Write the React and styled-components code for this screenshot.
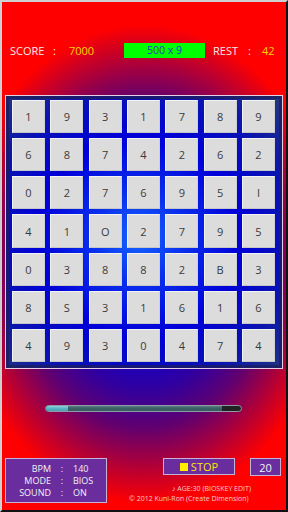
import React from "react";
import styled, { createGlobalStyle } from "styled-components";

const Global = createGlobalStyle`
  html, body { margin: 0; padding: 0; background: #000; }
  * { box-sizing: border-box; }
`;

const Screen = styled.div`
  width: 288px;
  height: 512px;
  border: 2px solid;
  border-color: #cfcfcf #111 #111 #cfcfcf;
  display: flex;
  flex-direction: column;
  font-family: "Open Sans", "Noto Sans", sans-serif;
  overflow: hidden;
  background: radial-gradient(
    ellipse 188px 240px at 142px 262px,
    #0000ff 0%,
    #0a00d8 30%,
    #3000a0 52%,
    #600070 68%,
    #b00038 84%,
    #ff0000 100%
  );
`;

const Header = styled.div`
  display: flex;
  align-items: center;
  height: 15px;
  margin-top: 41px;
  padding-left: 8px;
  font-size: 11px;
`;

const HText = styled.span`
  width: ${(p) => p.$w}px;
  color: ${(p) => (p.$yellow ? "#ffd400" : "#f4eaea")};
  white-space: nowrap;
  line-height: 15px;
`;

const GreenBox = styled.div`
  width: 81px;
  height: 15px;
  background: #00ff00;
  color: #2436c8;
  font-size: 10.5px;
  line-height: 15px;
  text-align: center;
  margin-right: 8px;
`;

const Board = styled.div`
  margin: 37px 0 0 3px;
  width: 278px;
  height: 274px;
  border: 1px solid #e6d2e6;
  padding: 4px 7px 6px 6px;
  background: radial-gradient(
    ellipse at 48% 52%,
    #1466ff 0%,
    #0a30ee 22%,
    #0000d8 50%,
    #0a14b0 75%,
    #243a78 100%
  );
  box-shadow: inset 0 0 0 3px rgba(30, 30, 90, 0.75);
`;

const Grid = styled.div`
  display: grid;
  grid-template-columns: repeat(7, 1fr);
  grid-template-rows: repeat(7, 1fr);
  column-gap: 5.3px;
  row-gap: 5.1px;
  width: 263px;
  height: 262px;
`;

const Cell = styled.div`
  background: #dcdcdc;
  border: 1px solid #f3f3f3;
  border-bottom-color: #c6c6c6;
  border-right-color: #d0d0d0;
  display: flex;
  align-items: center;
  justify-content: center;
  color: #3a3a3a;
  font-size: 11px;
`;

const Progress = styled.div`
  margin: 36px 0 0 43px;
  width: 197px;
  height: 7px;
  border-radius: 4px;
  border: 1px solid #8c9ea4;
  background: #222;
  display: flex;
  overflow: hidden;
`;

const Secondary = styled.div`
  width: 176px;
  height: 100%;
  background: linear-gradient(#5d8086 0%, #3b6268 40%, #365a60 100%);
  display: flex;
`;

const Primary = styled.div`
  height: 100%;
  background: linear-gradient(#8fd4e0 0%, #5cb4c6 45%, #4aa0b2 100%);
`;

const Bottom = styled.div`
  display: flex;
  margin-top: 46px;
  padding-left: 3px;
`;

const InfoBox = styled.div`
  width: 102px;
  height: 45px;
  background: #6a2d9e;
  border: 1px solid #c7b2d6;
  display: grid;
  grid-template-columns: 45px 22px auto;
  align-content: center;
  font-size: 9px;
  line-height: 12px;
  color: #f2f2f2;
`;

const Label = styled.span`
  text-align: right;
`;

const Colon = styled.span`
  text-align: center;
`;

const RightCol = styled.div`
  display: flex;
  flex-direction: column;
  flex: 1;
`;

const ButtonRow = styled.div`
  display: flex;
  align-items: flex-start;
  padding-left: 56px;
  gap: 15px;
`;

const PurpleButton = styled.div`
  width: ${(p) => p.$w}px;
  height: ${(p) => p.$h}px;
  background: #6a2d9e;
  border: 1px solid #c7b2d6;
  display: flex;
  align-items: center;
  justify-content: center;
  gap: 3px;
  font-size: 11px;
  color: ${(p) => (p.$yellow ? "#ffe600" : "#f4f4f4")};
`;

const Square = styled.span`
  width: 8px;
  height: 8px;
  background: #ffee00;
`;

const Credits = styled.div`
  margin-top: 8px;
  display: flex;
  flex-direction: column;
  font-size: 7px;
  line-height: 10px;
  color: #f6cccc;
`;

const CreditLine = styled.span`
  padding-left: ${(p) => p.$indent}px;
  white-space: nowrap;
`;

const rows = [
  ["1", "9", "3", "1", "7", "8", "9"],
  ["6", "8", "7", "4", "2", "6", "2"],
  ["0", "2", "7", "6", "9", "5", "I"],
  ["4", "1", "O", "2", "7", "9", "5"],
  ["0", "3", "8", "8", "2", "B", "3"],
  ["8", "S", "3", "1", "6", "1", "6"],
  ["4", "9", "3", "0", "4", "7", "4"],
];

const info = [
  ["BPM", "140"],
  ["MODE", "BIOS"],
  ["SOUND", "ON"],
];

export default function App() {
  return (
    <>
      <Global />
      <Screen>
        <Header>
          <HText $w={43}>SCORE</HText>
          <HText $w={16}>:</HText>
          <HText $w={55} $yellow>7000</HText>
          <GreenBox>500 x 9</GreenBox>
          <HText $w={35}>REST</HText>
          <HText $w={14}>:</HText>
          <HText $w={20} $yellow>42</HText>
        </Header>
        <Board>
          <Grid>
            {rows.flat().map((v, i) => (
              <Cell key={i}>{v}</Cell>
            ))}
          </Grid>
        </Board>
        <Progress>
          <Secondary>
            <Primary style={{ width: "22px" }} />
          </Secondary>
        </Progress>
        <Bottom>
          <InfoBox>
            {info.map(([k, v]) => (
              <React.Fragment key={k}>
                <Label>{k}</Label>
                <Colon>:</Colon>
                <span>{v}</span>
              </React.Fragment>
            ))}
          </InfoBox>
          <RightCol>
            <ButtonRow>
              <PurpleButton $w={72} $h={17} $yellow>
                <Square />
                STOP
              </PurpleButton>
              <PurpleButton $w={31} $h={18}>20</PurpleButton>
            </ButtonRow>
            <Credits>
              <CreditLine $indent={65}>♪ AGE:30 (BIOSKEY EDIT)</CreditLine>
              <CreditLine $indent={22}>© 2012 Kuni-Ron (Create Dimension)</CreditLine>
            </Credits>
          </RightCol>
        </Bottom>
      </Screen>
    </>
  );
}
